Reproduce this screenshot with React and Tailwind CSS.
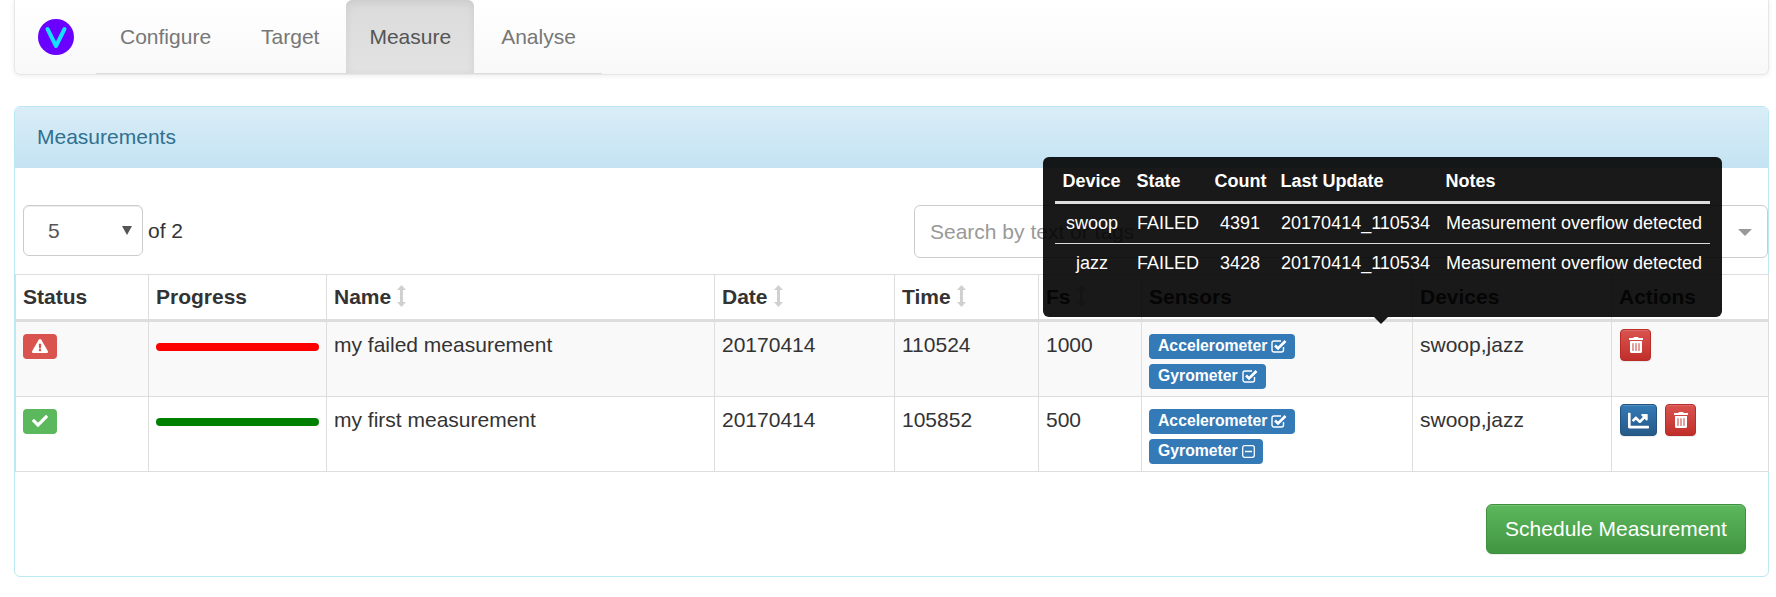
import * as React from 'react';
import { FaCheck, FaChartLine, FaExclamationTriangle, FaTrashAlt } from 'react-icons/fa';

const SortIcon = () => (
  <svg width="9" height="22" viewBox="0 0 9 22" className="inline-block ml-[6px] align-[-3px] text-[#d0d0d0]" fill="currentColor">
    <path d="M4.5 0 L9 5 L6 5 L6 17 L9 17 L4.5 22 L0 17 L3 17 L3 5 L0 5 Z" />
  </svg>
);

// font awesome 4 style check-square-o, the tick sticks out of the box
const CheckBox = () => (
  <svg width="16" height="14" viewBox="0 0 16 14" className="ml-[4px]" fill="none" stroke="currentColor">
    <path d="M12.5 8 V11 A2 2 0 0 1 10.5 13 H3 A2 2 0 0 1 1 11 V4 A2 2 0 0 1 3 2 H10" strokeWidth="1.4" />
    <path d="M4 6.5 L7 9.5 L14.5 2" strokeWidth="2.6" />
  </svg>
);

const MinusBox = () => (
  <svg width="13" height="13" viewBox="0 0 13 13" className="ml-[4px]" fill="none" stroke="currentColor">
    <rect x="0.7" y="0.7" width="11.6" height="11.6" rx="2" strokeWidth="1.3" />
    <path d="M3 6.5 H10" strokeWidth="1.5" />
  </svg>
);

const Sensor = ({ name, on }) => (
  <span className="inline-flex items-center self-start h-[25px] pl-[9px] pr-[8px] rounded-[4px] bg-[#337ab7] text-white text-[15.75px] font-bold leading-none">
    {name}
    {on ? <CheckBox /> : <MinusBox />}
  </span>
);

const TrashButton = () => (
  <button className="flex items-center justify-center w-[31px] h-[32px] rounded-[4px] border border-[#b92c28] bg-gradient-to-b from-[#d9534f] to-[#c12e2a] text-white text-[16px] shadow-[inset_0_1px_0_rgba(255,255,255,0.15),0_1px_1px_rgba(0,0,0,0.075)]">
    <FaTrashAlt />
  </button>
);

const Row = ({ striped, failed, name, time, fs, gyro }) => (
  <tr className={striped ? 'bg-[#f9f9f9]' : ''}>
    <td className="border border-[#ddd] px-[7px] pt-[11.5px] pb-0 align-top">
      <div className={'flex items-center justify-center w-[34px] h-[25px] rounded-[4px] text-white text-[16px] ' + (failed ? 'bg-[#d9534f]' : 'bg-[#5cb85c]')}>
        {failed ? <FaExclamationTriangle /> : <FaCheck />}
      </div>
    </td>
    <td className="border border-[#ddd] px-[7px] align-top">
      <div className={'mt-[21px] h-[8px] rounded-full ' + (failed ? 'bg-[#ff0000]' : 'bg-[#008000]')}></div>
    </td>
    <td className="border border-[#ddd] px-[7px] py-[7.5px] align-top">{name}</td>
    <td className="border border-[#ddd] px-[7px] py-[7.5px] align-top">20170414</td>
    <td className="border border-[#ddd] px-[7px] py-[7.5px] align-top">{time}</td>
    <td className="border border-[#ddd] px-[7px] py-[7.5px] align-top">{fs}</td>
    <td className="border border-[#ddd] px-[7px] pt-[11.5px] pb-[7.5px] align-top">
      <div className="flex flex-col gap-[5px]">
        <Sensor name="Accelerometer" on />
        <Sensor name="Gyrometer" on={gyro} />
      </div>
    </td>
    <td className="border border-[#ddd] px-[7px] py-[7.5px] align-top">swoop,jazz</td>
    <td className="border border-[#ddd] px-[8px] pt-[7px] align-top">
      <div className="flex gap-[8px]">
        {!failed && (
          <button className="flex items-center justify-center w-[37px] h-[32px] rounded-[4px] border border-[#245580] bg-gradient-to-b from-[#337ab7] to-[#265a88] text-white text-[21px] shadow-[inset_0_1px_0_rgba(255,255,255,0.15),0_1px_1px_rgba(0,0,0,0.075)]">
            <FaChartLine />
          </button>
        )}
        <TrashButton />
      </div>
    </td>
  </tr>
);

const Tip = () => (
  <div className="absolute left-[1043px] top-[157px] w-[679px] h-[160px] rounded-[6px] bg-black/90 px-[12px] pt-[4.5px] text-white text-[18px] leading-[26px]">
    <table className="w-[655px] table-fixed border-collapse">
      <colgroup>
        <col className="w-[74px]" />
        <col className="w-[78px]" />
        <col className="w-[66px]" />
        <col className="w-[165px]" />
        <col className="w-[272px]" />
      </colgroup>
      <thead>
        <tr className="border-b-[3px] border-[#ddd] text-left">
          <th className="px-[7.5px] pt-[6px] pb-[7.5px] font-bold">Device</th>
          <th className="px-[7.5px] pt-[6px] pb-[7.5px] font-bold">State</th>
          <th className="px-[7.5px] pt-[6px] pb-[7.5px] font-bold">Count</th>
          <th className="px-[7.5px] pt-[6px] pb-[7.5px] font-bold">Last Update</th>
          <th className="px-[7.5px] pt-[6px] pb-[7.5px] font-bold">Notes</th>
        </tr>
      </thead>
      <tbody className="text-center">
        <tr className="border-b border-[#ddd]">
          <td className="pt-[5.5px] pb-[7.5px]">swoop</td>
          <td className="pt-[5.5px] pb-[7.5px]">FAILED</td>
          <td className="pt-[5.5px] pb-[7.5px]">4391</td>
          <td className="pt-[5.5px] pb-[7.5px]">20170414_110534</td>
          <td className="pt-[5.5px] pb-[7.5px]">Measurement overflow detected</td>
        </tr>
        <tr>
          <td className="pt-[5.5px] pb-[7.5px]">jazz</td>
          <td className="pt-[5.5px] pb-[7.5px]">FAILED</td>
          <td className="pt-[5.5px] pb-[7.5px]">3428</td>
          <td className="pt-[5.5px] pb-[7.5px]">20170414_110534</td>
          <td className="pt-[5.5px] pb-[7.5px]">Measurement overflow detected</td>
        </tr>
      </tbody>
    </table>
    <div className="absolute left-[331px] -bottom-[7px] w-0 h-0 border-x-[7px] border-x-transparent border-t-[7px] border-t-black/90"></div>
  </div>
);

export default function App() {
  return (
    <div className="relative h-[597px] w-[1776px] overflow-hidden bg-white pl-[14px] pr-[7px] font-['Liberation_Sans',Arial,sans-serif] text-[21px] leading-[30px] text-[#333]">
      {/* Navbar */}
      <nav className="flex h-[75px] rounded-b-[6px] border-x border-b border-[#e7e7e7] bg-gradient-to-b from-white to-[#f8f8f8] shadow-[0_1px_5px_rgba(0,0,0,0.075)]">
        <div className="flex items-center pl-[23px] w-[81px] shrink-0">
          <svg width="36" height="36" viewBox="0 0 36 36">
            <circle cx="18" cy="18" r="18" fill="#6a00ff" />
            <path d="M9.5 10 L18 27 L26.5 10" fill="none" stroke="#15e0ff" strokeWidth="4" strokeLinejoin="round" strokeLinecap="round" />
          </svg>
        </div>
        <ul className="flex gap-[4px] pl-[1px] w-[506px] h-[74px] border-b border-[#ddd] text-[#777]">
          <li className="px-[23px] pt-[22px]">Configure</li>
          <li className="px-[23px] pt-[22px]">Target</li>
          <li className="px-[23px] pt-[22px] rounded-t-[6px] text-[#555] bg-gradient-to-b from-[#dbdbdb] to-[#e2e2e2] shadow-[inset_0_3px_9px_rgba(0,0,0,0.075)]">Measure</li>
          <li className="px-[23px] pt-[22px]">Analyse</li>
        </ul>
      </nav>

      {/* Panel */}
      <div className="mt-[31px] h-[471px] rounded-[6px] border border-[#bce8f1] bg-white">
        <div className="h-[61px] rounded-t-[5px] bg-gradient-to-b from-[#d9edf7] to-[#c4e3f3] px-[22px] pt-[15px] text-[#31708f]">Measurements</div>
        <div className="flex items-start justify-between pt-[37px] pl-[8px]">
          <div className="flex items-center h-[51px]">
            <div className="relative w-[120px] h-[51px] rounded-[6px] border border-[#ccc] pl-[24px] pt-[10px] text-[#555] shadow-[inset_0_1px_1px_rgba(0,0,0,0.075)]">
              5
              <div className="absolute right-[10px] top-[20px] w-0 h-0 border-x-[5px] border-x-transparent border-t-[9px] border-t-[#555]"></div>
            </div>
            <span className="ml-[5px]">of 2</span>
          </div>
          <div className="relative w-[854px] h-[53px] rounded-[6px] border border-[#ccc] pl-[15px] pt-[11px] text-[#999]">
            Search by text or tags
            <div className="absolute right-[15px] top-[23px] w-0 h-0 border-x-[7px] border-x-transparent border-t-[7.5px] border-t-[#999]"></div>
          </div>
        </div>
        <table className="mt-[16px] w-[1753px] table-fixed border-collapse">
          <colgroup>
            <col className="w-[133px]" />
            <col className="w-[178px]" />
            <col className="w-[388px]" />
            <col className="w-[180px]" />
            <col className="w-[144px]" />
            <col className="w-[103px]" />
            <col className="w-[271px]" />
            <col className="w-[199px]" />
            <col className="w-[157px]" />
          </colgroup>
          <thead>
            <tr className="h-[46px] text-left">
              <th className="border border-b-[3px] border-[#ddd] px-[7px] font-bold">Status</th>
              <th className="border border-b-[3px] border-[#ddd] px-[7px] font-bold">Progress</th>
              <th className="border border-b-[3px] border-[#ddd] px-[7px] font-bold">Name<SortIcon /></th>
              <th className="border border-b-[3px] border-[#ddd] px-[7px] font-bold">Date<SortIcon /></th>
              <th className="border border-b-[3px] border-[#ddd] px-[7px] font-bold">Time<SortIcon /></th>
              <th className="border border-b-[3px] border-[#ddd] px-[7px] font-bold">Fs<SortIcon /></th>
              <th className="border border-b-[3px] border-[#ddd] px-[7px] font-bold">Sensors</th>
              <th className="border border-b-[3px] border-[#ddd] px-[7px] font-bold">Devices</th>
              <th className="border border-b-[3px] border-[#ddd] px-[7px] font-bold">Actions</th>
            </tr>
          </thead>
          <tbody>
            <Row striped failed name="my failed measurement" time="110524" fs="1000" gyro />
            <Row name="my first measurement" time="105852" fs="500" />
          </tbody>
        </table>
        <div className="flex justify-end pr-[22px] mt-[32px]">
          <button className="h-[50px] w-[260px] rounded-[6px] border border-[#3e8f3e] bg-gradient-to-b from-[#5cb85c] to-[#419641] text-white shadow-[inset_0_1px_0_rgba(255,255,255,0.15),0_1px_1px_rgba(0,0,0,0.075)]">
            Schedule Measurement
          </button>
        </div>
      </div>

      <Tip />
    </div>
  );
}
